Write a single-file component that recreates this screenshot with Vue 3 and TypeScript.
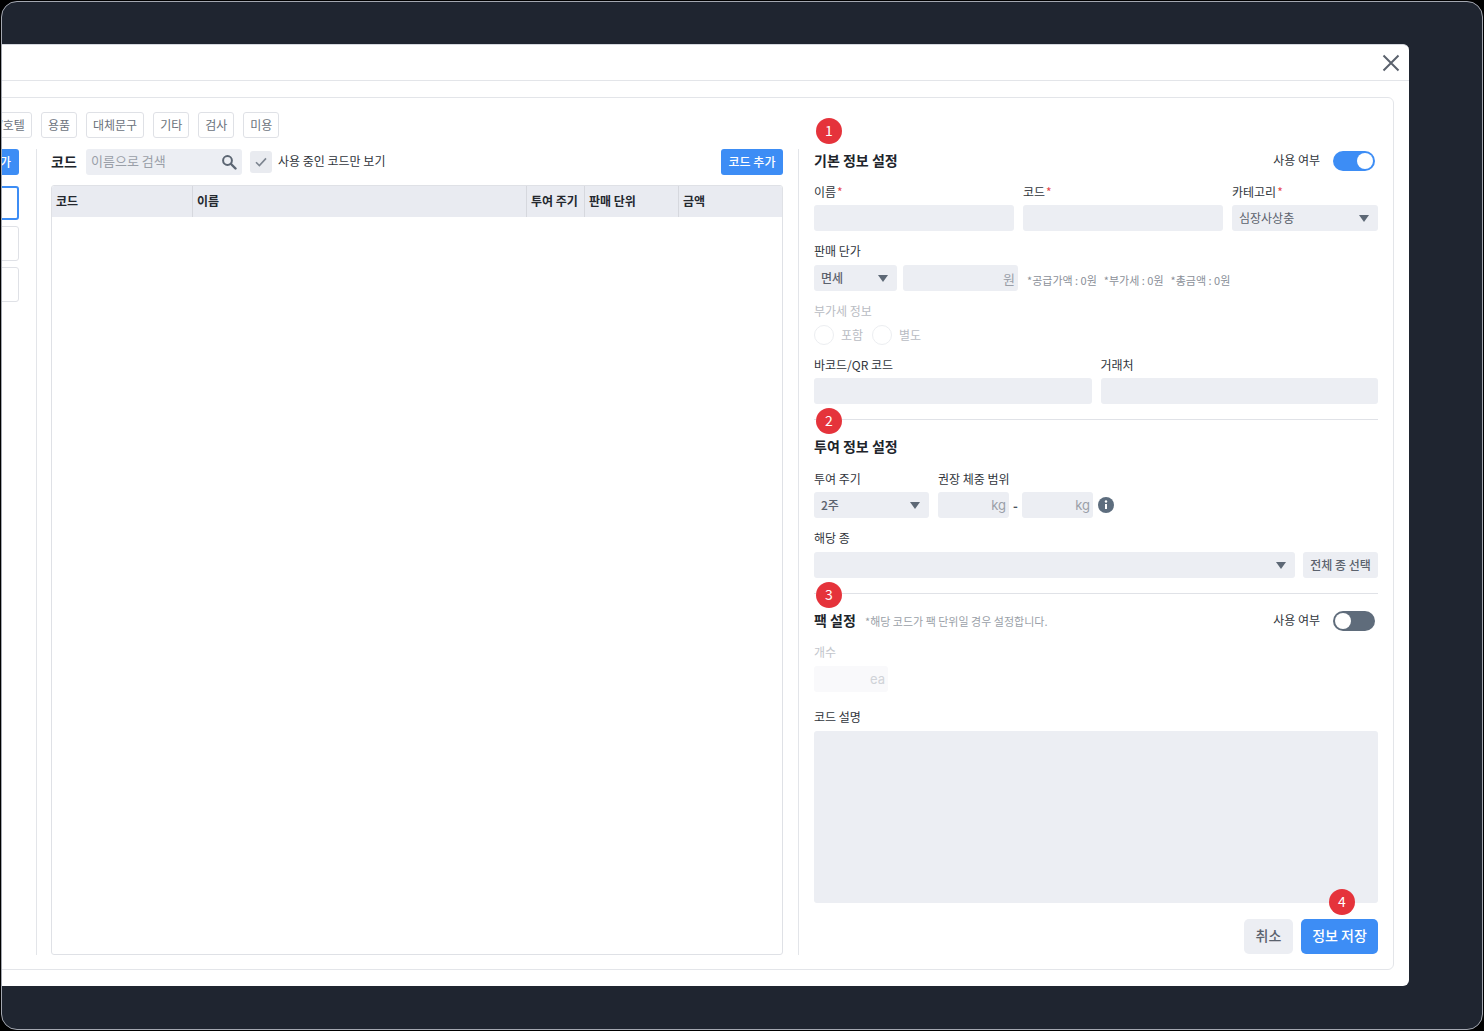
<script setup lang="ts">
const tabs: string[] = ['용품', '대체문구', '기타', '검사', '미용']
const columns: string[] = ['코드', '이름', '투여 주기', '판매 단위', '금액']
</script>

<template>
  <div class="screen">
    <div class="frame">
      <section class="modal">
        <header class="modal-head">
          <svg class="close" width="18" height="18" viewBox="0 0 18 18" aria-label="닫기">
            <path d="M1.5 1.5 16.5 16.5M16.5 1.5 1.5 16.5" fill="none" stroke="#5b626d" stroke-width="2" />
          </svg>
        </header>
        <div class="modal-body">
          <div class="card">
            <div class="browser">
              <nav class="tabs">
                <span class="tab">애견/호텔</span>
                <span v-for="t in tabs" :key="t" class="tab">{{ t }}</span>
              </nav>
              <div class="lists">
                <aside class="categories">
                  <button class="btn-blue small">카테고리 추가</button>
                  <div class="cat selected"></div>
                  <div class="cat"></div>
                  <div class="cat"></div>
                </aside>
                <div class="codes">
                  <div class="code-bar">
                    <strong class="code-title">코드</strong>
                    <div class="search">
                      <input class="search-input" placeholder="이름으로 검색" />
                      <svg width="16" height="16" viewBox="0 0 16 16">
                        <circle cx="6.5" cy="6.5" r="4.4" fill="none" stroke="#5b6572" stroke-width="2" />
                        <path d="M10 10 14.5 14.5" stroke="#5b6572" stroke-width="2.4" stroke-linecap="round" />
                      </svg>
                    </div>
                    <span class="check">
                      <svg width="12" height="10" viewBox="0 0 12 10">
                        <path d="M1 5.2 4.4 8.6 11 1.4" fill="none" stroke="#7d8590" stroke-width="1.6" />
                      </svg>
                    </span>
                    <span class="check-label">사용 중인 코드만 보기</span>
                    <button class="btn-blue small push">코드 추가</button>
                  </div>
                  <div class="table">
                    <div class="thead">
                      <div v-for="c in columns" :key="c" class="th">{{ c }}</div>
                    </div>
                  </div>
                </div>
              </div>
            </div>

            <form class="form" @submit.prevent>
              <span class="badge b1">1</span>
              <span class="badge b2">2</span>
              <span class="badge b3">3</span>
              <span class="badge b4">4</span>

              <div class="title-row first">
                <h3>기본 정보 설정</h3>
                <span class="use-label">사용 여부</span>
                <span class="toggle on"><i></i></span>
              </div>

              <div class="row r-basic">
                <label class="field">
                  <span class="lbl">이름<em>*</em></span>
                  <input class="inp" />
                </label>
                <label class="field">
                  <span class="lbl">코드<em>*</em></span>
                  <input class="inp" />
                </label>
                <div class="field">
                  <span class="lbl">카테고리<em>*</em></span>
                  <div class="inp sel">심장사상충<b class="caret"></b></div>
                </div>
              </div>

              <div class="field gap-top">
                <span class="lbl">판매 단가</span>
                <div class="row price">
                  <div class="inp sel strong w83">면세<b class="caret"></b></div>
                  <div class="inp suffix w115">원</div>
                  <p class="price-note">
                    <span>*공급가액 : 0원</span><span>*부가세 : 0원</span><span>*총금액 : 0원</span>
                  </p>
                </div>
              </div>

              <div class="field gap-top disabled-block">
                <span class="lbl">부가세 정보</span>
                <div class="radios">
                  <span class="radio"></span><span class="radio-text first-r">포함</span>
                  <span class="radio"></span><span class="radio-text">별도</span>
                </div>
              </div>

              <div class="row r-two gap-top">
                <label class="field tight">
                  <span class="lbl">바코드/QR 코드</span>
                  <input class="inp" />
                </label>
                <label class="field tight">
                  <span class="lbl">거래처</span>
                  <input class="inp" />
                </label>
              </div>

              <hr class="rule rule-a" />

              <div class="title-row">
                <h3>투여 정보 설정</h3>
              </div>

              <div class="row dose">
                <div class="field tight">
                  <span class="lbl">투여 주기</span>
                  <div class="inp sel strong w115">2주<b class="caret"></b></div>
                </div>
                <div class="field tight">
                  <span class="lbl">권장 체중 범위</span>
                  <div class="range">
                    <div class="inp suffix w71">kg</div>
                    <span class="dash">-</span>
                    <div class="inp suffix w71">kg</div>
                    <svg class="info" width="16" height="16" viewBox="0 0 16 16">
                      <circle cx="8" cy="8" r="8" fill="#5d6d7e" />
                      <circle cx="8" cy="4.5" r="1.2" fill="#fff" />
                      <path d="M8 7v5" stroke="#fff" stroke-width="2" />
                    </svg>
                  </div>
                </div>
              </div>

              <div class="field gap-top">
                <span class="lbl">해당 종</span>
                <div class="row species">
                  <div class="inp sel grow"><b class="caret"></b></div>
                  <button class="btn-gray-sm">전체 종 선택</button>
                </div>
              </div>

              <hr class="rule rule-b" />

              <div class="title-row pack">
                <h3>팩 설정</h3>
                <span class="pack-note">*해당 코드가 팩 단위일 경우 설정합니다.</span>
                <span class="use-label">사용 여부</span>
                <span class="toggle"><i></i></span>
              </div>

              <div class="field pack-field">
                <span class="lbl">개수</span>
                <div class="inp suffix w74 ghost">ea</div>
              </div>

              <div class="field desc">
                <span class="lbl">코드 설명</span>
                <textarea class="area"></textarea>
              </div>

              <div class="actions">
                <button class="btn-cancel">취소</button>
                <button class="btn-save">정보 저장</button>
              </div>
            </form>
          </div>
        </div>
      </section>
    </div>
  </div>
</template>

<style>
html, body { margin: 0; background: #000; }
</style>

<style scoped>
* { box-sizing: border-box; }
.screen {
  width: 1484px; height: 1031px; padding: 1px; background: #000;
  font-family: "Noto Sans CJK KR", Inter, sans-serif; color: #20242b;
}
.frame {
  height: 100%; border: 1px solid #a3a7b0; border-radius: 16px; background: #1f2530;
  overflow: hidden; padding-top: 42px;
}
.modal {
  margin-left: -101px; width: 1508px; height: 942px; background: #fff; border-radius: 6px;
  display: flex; flex-direction: column; border-top: 1px solid #d5d8de;
}
.modal-head {
  height: 36px; flex: none; border-bottom: 1px solid #e3e5e9;
  display: flex; justify-content: flex-end; align-items: center; padding-right: 9px;
}
.close { margin-top: 1px; }
.modal-body { flex: 1; padding: 16px 15px 16px 16px; min-height: 0; }
.card {
  height: 100%; border: 1px solid #e3e5e9; border-radius: 6px; display: flex;
  padding: 14px 15px;
}
.browser { flex: 1; min-width: 0; display: flex; flex-direction: column; }
.tabs { display: flex; gap: 9px; height: 26px; flex: none; padding-left: 36px; }
.tab {
  height: 26px; padding: 0 6px; border: 1px solid #dfe1e6; border-radius: 3px;
  font-size: 12px; line-height: 23px; color: #6b727c; white-space: nowrap;
}
.lists { flex: 1; display: flex; margin-top: 11px; min-height: 0; }
.categories { width: 86px; flex: none; display: flex; flex-direction: column; align-items: stretch; }
.btn-blue {
  border: 0; border-radius: 3px; background: #3d8df5; color: #fff; font: inherit;
  font-size: 12px; font-weight: 500; height: 26px; padding: 0 8px 1px; white-space: nowrap;
}
.categories .btn-blue { align-self: flex-end; margin-bottom: 11px; }
.cat { height: 35px; border: 1px solid #dfe1e6; border-radius: 3px; margin-bottom: 6px; }
.cat.selected { height: 34px; border: 2px solid #3d8df5; }
.codes {
  margin-left: 17px; flex: 1; min-width: 0; border-left: 1px solid #e3e5e9;
  padding-left: 14px; display: flex; flex-direction: column;
}
.code-bar { display: flex; align-items: center; height: 26px; flex: none; }
.code-title { font-size: 14px; font-weight: 700; width: 35px; flex: none; padding-bottom: 3px; }
.search {
  width: 156px; height: 26px; background: #eceef3; border-radius: 3px;
  display: flex; align-items: center; padding: 0 5px;
}
.search-input {
  flex: 1; min-width: 0; border: 0; background: transparent; outline: 0; padding: 0 0 3px;
  font: inherit; font-size: 13px;
}
.search-input::placeholder { color: #9a9fa8; opacity: 1; }
.check {
  width: 22px; height: 22px; margin-left: 8px; background: #e9ebf0; border-radius: 3px;
  display: flex; align-items: center; justify-content: center;
}
.check-label { font-size: 12px; margin-left: 6px; color: #30353c; padding-bottom: 3px; }
.push { margin-left: auto; width: 62px; padding: 0 0 1px; }
.table {
  flex: 1; margin-top: 10px; border: 1px solid #dfe1e6; border-radius: 3px;
  overflow: hidden; min-height: 0;
}
.thead {
  display: grid; grid-template-columns: 140px 334px 58px 94px 1fr;
  height: 31px; background: #e9ebf1;
}
.th {
  font-size: 12px; font-weight: 700; line-height: 29px; padding-left: 4px;
  border-left: 1px solid #d6d8de; color: #24282f; white-space: nowrap;
}
.th:first-child { border-left: 0; }

.form {
  position: relative; width: 580px; flex: none; margin: 37px 0 0 15px;
  border-left: 1px solid #e3e5e9; padding: 2px 0 0 15px;
  display: flex; flex-direction: column;
}
.badge {
  position: absolute; left: 17px; width: 26px; height: 26px; border-radius: 50%;
  background: #e5333b; color: #fff; font-size: 14px; line-height: 25px; text-align: center;
  z-index: 2;
}
.b1 { top: -31px; }
.b2 { top: 259px; }
.b3 { top: 433px; }
.b4 { left: 530px; top: 740px; }

.title-row { display: flex; align-items: center; height: 20px; flex: none; }
.title-row h3 { margin: 0; font-size: 14px; font-weight: 700; line-height: 18px; color: #20242b; padding-bottom: 3px; }
.use-label { margin-left: auto; font-size: 12px; color: #30353c; margin-right: 13px; padding-bottom: 3px; }
.toggle {
  width: 42px; height: 20px; border-radius: 10px; background: #5f6c7b; padding: 2px;
  display: flex; margin-right: 3px; flex: none;
}
.toggle i { width: 16px; height: 16px; border-radius: 50%; background: #fff; display: block; }
.toggle.on { background: #3d8df5; justify-content: flex-end; }

.row { display: flex; gap: 9px; }
.gap-top { margin-top: 12px; }
.r-basic { margin-top: 13px; }
.r-basic .field { gap: 5px; }
.field { display: flex; flex-direction: column; gap: 6px; min-width: 0; }
.field.tight { gap: 5px; }
.lbl { display: block; font-size: 12px; line-height: 16px; color: #30353c; white-space: nowrap; }
.lbl em { font-style: normal; color: #e5484d; margin-left: 1px; }
.r-basic .field:nth-child(1), .r-basic .field:nth-child(2) { width: 200px; }
.r-basic .field:nth-child(3) { width: 146px; }
.r-two .field { flex: 1; }
.inp {
  width: 100%; height: 26px; border: 0; outline: 0; background: #eceef3; border-radius: 3px;
  font: inherit; font-size: 12px; color: #5b626d; padding: 0 7px; display: block;
}
.sel { display: flex; align-items: center; justify-content: space-between; padding-bottom: 2px; }
.sel.strong { font-weight: 500; }
.caret {
  width: 0; height: 0; border-left: 5.5px solid transparent; border-right: 5.5px solid transparent;
  border-top: 7px solid #5d6875; margin: 2px 2px 0 auto; display: block;
}
.suffix {
  display: flex; align-items: center; justify-content: flex-end; padding: 0 3px;
  font-family: Inter, "Noto Sans CJK KR", sans-serif; font-size: 13px; color: #9a9fa8;
}
.w83 { width: 83px; flex: none; }
.w115 { width: 115px; flex: none; }
.w71 { width: 71px; flex: none; }
.w74 { width: 74px; flex: none; }
.price { gap: 6px; align-items: center; }
.price-note {
  margin: 4px 0 0 3px; font-size: 11px; color: #8b9099; display: flex; gap: 7px; white-space: nowrap;
}
.disabled-block .lbl { color: #b9bcc3; }
.radios { display: flex; align-items: center; height: 20px; }
.radio { width: 20px; height: 20px; border-radius: 50%; border: 1px solid #eceef1; flex: none; }
.radio-text { font-size: 12px; color: #b9bcc3; margin-left: 7px; padding-bottom: 2px; }
.first-r { width: 31px; }
.rule { width: 100%; margin: 0; border: 0; height: 1px; background: #e0e2e7; flex: none; }
.rule-a { margin-top: 15px; margin-bottom: 17px; }
.rule-b { margin-top: 15px; margin-bottom: 17px; }
.dose { margin-top: 14px; }
.range { display: flex; align-items: center; }
.dash { width: 13px; text-align: center; font-size: 13px; font-weight: 600; color: #4b525c; }
.info { margin-left: 5px; flex: none; }
.species { gap: 8px; }
.grow { flex: 1; width: auto; }
.btn-gray-sm {
  width: 75px; height: 26px; flex: none; border: 0; border-radius: 3px; background: #eceef3;
  color: #5b626d; font: inherit; font-size: 12px; font-weight: 500; padding: 0 0 2px; white-space: nowrap;
}
.pack h3 { width: 51px; flex: none; }
.pack-note { font-size: 11px; color: #9a9fa8; white-space: nowrap; }
.pack-field { margin-top: 13px; }
.pack-field .lbl { color: #c3c6cc; }
.ghost { background: #f9f9fb; color: #d0d3d8; }
.desc { margin-top: 17px; }
.area {
  display: block; width: 100%; height: 172px; resize: none; border: 0; outline: 0;
  background: #eceef3; border-radius: 3px;
}
.actions { margin-top: 16px; display: flex; justify-content: flex-end; gap: 8px; }
.btn-cancel, .btn-save {
  height: 35px; border: 0; border-radius: 5px; font: inherit; font-size: 14px; font-weight: 500; padding: 0 0 3px;
}
.btn-cancel { width: 49px; background: #eceef3; color: #5b626d; }
.btn-save { width: 77px; background: #3d8df5; color: #fff; }
</style>
